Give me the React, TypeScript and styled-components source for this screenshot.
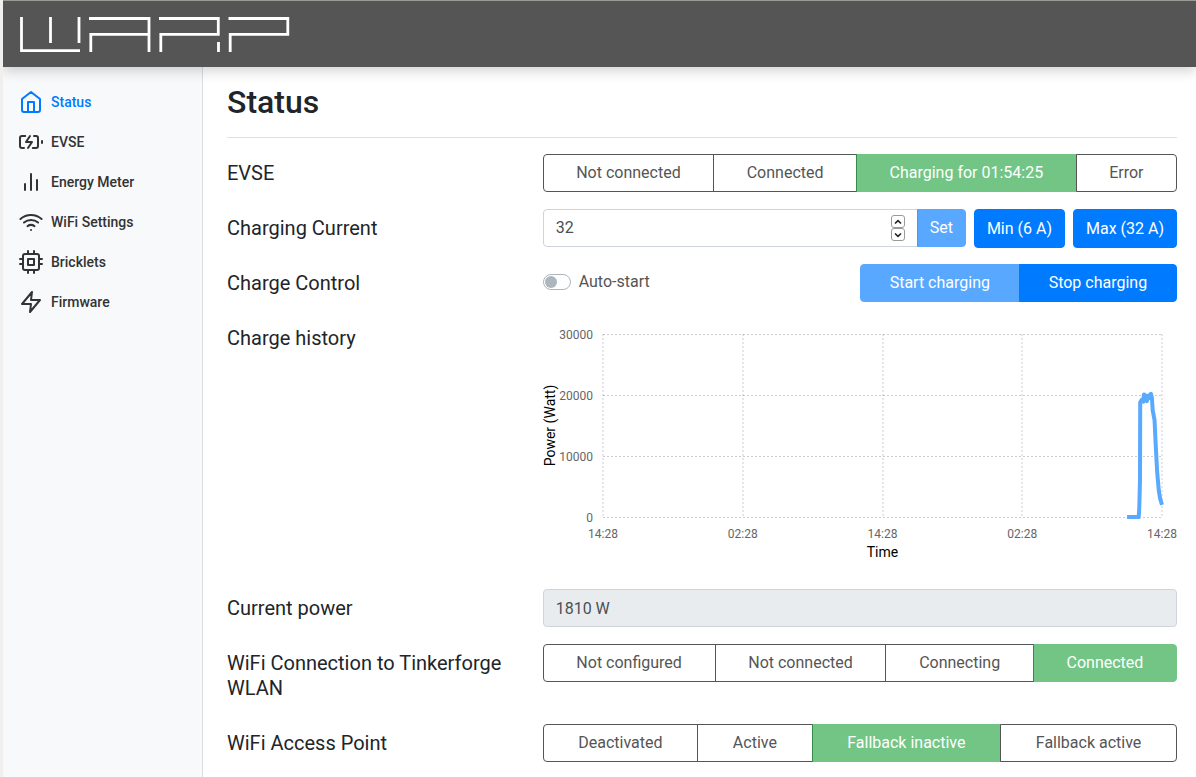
import React, { useLayoutEffect, useRef, useState } from "react";
import styled, { createGlobalStyle, css } from "styled-components";

const GlobalStyle = createGlobalStyle`
  *, *::before, *::after { box-sizing: border-box; }
  body {
    margin: 0;
    background: #fff;
    color: #212529;
    font-family: Roboto, "Liberation Sans", sans-serif;
    font-size: 16px;
    line-height: 24px;
  }
  button, input { font: inherit; margin: 0; }
`;

const Page = styled.div`
  display: flex;
  flex-direction: column;
  min-height: 100vh;
  border-left: 3px solid #f0efee;
  overflow: hidden;
`;

const Header = styled.header`
  display: flex;
  align-items: center;
  height: 67px;
  padding: 1px 17px 0;
  background: #555;
  border-top: 1px solid #9a9a94;
  box-shadow: 0 4px 12px rgba(0, 0, 0, 0.18);
  z-index: 1;
`;

const LogoLink = styled.a`
  display: flex;
`;

const Body = styled.div`
  display: flex;
  flex: 1;
`;

const Sidebar = styled.nav`
  flex: none;
  width: 200px;
  padding: 15px 0;
  background: #f8f9fa;
  border-right: 1px solid #dcdee0;
`;

const NavLink = styled.a<{ $active?: boolean }>`
  display: flex;
  align-items: center;
  gap: 8px;
  height: 40px;
  padding: 0 16px;
  font-size: 14px;
  font-weight: 500;
  text-decoration: none;
  color: ${(p) => (p.$active ? "#007bff" : "#333")};
`;

const Main = styled.main`
  flex: 1;
  min-width: 0;
  padding: 16px 19px 0 24px;
`;

const Title = styled.h1`
  margin: 0 0 16px;
  padding-bottom: 16px;
  border-bottom: 1px solid #dee2e6;
  font-size: 32px;
  line-height: 38px;
  font-weight: 500;
`;

const Row = styled.div`
  display: grid;
  grid-template-columns: calc(100% / 3 - 1px) 1fr;
  margin-bottom: 16px;
`;

const labelStyle = css`
  padding: 7px 15px 7px 0;
  font-size: 20px;
  line-height: 25px;
`;

const RowLabel = styled.div`
  ${labelStyle}
`;

const FieldLabel = styled.label`
  ${labelStyle}
`;

const Group = styled.div`
  display: flex;
  align-items: flex-start;
  min-width: 0;
`;

const joined = css`
  position: relative;
  &:not(:first-child) {
    margin-left: -1px;
    border-top-left-radius: 0;
    border-bottom-left-radius: 0;
  }
  &:not(:last-child) {
    border-top-right-radius: 0;
    border-bottom-right-radius: 0;
  }
`;

const StateButton = styled.button<{ $on?: boolean }>`
  flex: 1 1 auto;
  height: 38px;
  padding: 0 12px;
  border: 1px solid ${(p) => (p.$on ? "#28a745" : "#555")};
  border-radius: 4px;
  background: ${(p) => (p.$on ? "#28a745" : "transparent")};
  color: ${(p) => (p.$on ? "#fff" : "#555")};
  opacity: ${(p) => (p.$on ? 0.65 : 1)};
  ${joined}
`;

const PrimaryButton = styled.button<{ $grow?: boolean; $joined?: boolean }>`
  flex: ${(p) => (p.$grow ? "1 1 auto" : "none")};
  min-height: 38px;
  padding: 0 12px;
  border: 1px solid #007bff;
  border-radius: 4px;
  background: #007bff;
  color: #fff;
  &:disabled {
    opacity: 0.65;
  }
  ${(p) => p.$joined && joined}
`;

const CurrentControls = styled.div`
  display: flex;
  gap: 8px;
`;

const InputGroup = styled.div`
  display: flex;
  flex: 1;
  align-items: flex-start;
  min-width: 0;
`;

const NumberField = styled.div`
  display: flex;
  flex: 1;
  align-items: center;
  min-width: 0;
  height: 38px;
  padding: 0 12px;
  border: 1px solid #ced4da;
  border-radius: 4px 0 0 4px;
  background: #fff;
`;

const NumberInput = styled.input`
  flex: 1;
  min-width: 0;
  padding: 0;
  border: 0;
  outline: 0;
  color: #495057;
  appearance: textfield;
  &::-webkit-inner-spin-button {
    appearance: none;
  }
`;

const Spinner = styled.div`
  display: flex;
  flex-direction: column;
`;

const SpinButton = styled.button`
  display: flex;
  align-items: center;
  justify-content: center;
  width: 14px;
  height: 13px;
  padding: 0;
  border: 1px solid #999;
  border-radius: 3px;
  background: #fff;
  color: #222;
`;

const PowerInput = styled.input`
  width: 100%;
  height: 38px;
  padding: 0 12px;
  border: 1px solid #ced4da;
  border-radius: 4px;
  background: #e9ecef;
  color: #495057;
`;

const ControlGrid = styled.div`
  display: grid;
  grid-template-columns: 1fr 1fr;
`;

const SwitchLabel = styled.label`
  display: flex;
  align-items: center;
  align-self: start;
  gap: 8px;
  height: 36px;
  color: #555;
`;

const Switch = styled.input`
  appearance: none;
  display: flex;
  align-items: center;
  width: 28px;
  height: 16px;
  padding: 0 1px;
  border: 1px solid #adb5bd;
  border-radius: 8px;
  background: #fff;
  &::before {
    content: "";
    width: 12px;
    height: 12px;
    border-radius: 50%;
    background: #adb5bd;
  }
  &:checked {
    justify-content: flex-end;
    border-color: #007bff;
    background: #007bff;
  }
  &:checked::before {
    background: #fff;
  }
`;

const ChartBox = styled.div`
  height: 254px;
  min-width: 0;
`;

const ChartSvg = styled.svg`
  display: block;
  width: 100%;
  height: 100%;
  overflow: visible;
`;

const GridLine = styled.line`
  stroke: rgba(0, 0, 0, 0.2);
  stroke-width: 1;
  stroke-dasharray: 2 2;
`;

const Tick = styled.text`
  font-size: 12px;
  fill: #666;
`;

const AxisTitle = styled.text`
  font-size: 14px;
  fill: #000;
  text-anchor: middle;
`;

const PowerLine = styled.polyline`
  fill: none;
  stroke: #59a9ff;
  stroke-width: 4;
  stroke-linejoin: round;
`;

function Logo() {
  return (
    <svg width="270" height="36" viewBox="0 0 270 36" fill="none" stroke="#fff" strokeWidth="2.8" role="img" aria-label="WARP">
      <path d="M1.5 0V33.7H60M30.5 0V26M59 0V26" />
      <path d="M69 1.5H129V35M128 17.3H70.8V35" />
      <path d="M139 1.5H198.3V17.3H140.8V35M198.5 25V35" />
      <path d="M208.5 1.5H267.8V17.3H210.2V35" />
    </svg>
  );
}

// Samples of the last 48 hours: [hours since start, watts].
const samples: [number, number][] = [
  [45, 0], [46, 0], [46.05, 1500], [46.11, 6000], [46.13, 18800], [46.26, 19200], [46.4, 18900], [46.45, 20100],
  [46.6, 19900], [46.7, 19000], [46.85, 19900], [46.92, 19500], [47.05, 20200], [47.13, 19600],
  [47.2, 17500], [47.36, 15900], [47.46, 11800], [47.58, 7500], [47.72, 4400], [47.84, 3000], [48, 2000],
];
const timeTicks = ["14:28", "02:28", "14:28", "02:28", "14:28"];
const powerTicks = [30000, 20000, 10000, 0];

function HistoryChart() {
  const box = useRef<HTMLDivElement>(null);
  const [width, setWidth] = useState(634);
  useLayoutEffect(() => {
    const el = box.current!;
    const measure = () => setWidth(Math.round(el.clientWidth));
    measure();
    const observer = new ResizeObserver(measure);
    observer.observe(el);
    return () => observer.disconnect();
  }, []);

  const left = 60;
  const right = width - 15;
  const top = 15;
  const bottom = 198;
  const x = (hours: number) => left + ((right - left) * hours) / 48;
  const y = (watts: number) => bottom - ((bottom - top) * watts) / 30000;
  const middle = (top + bottom) / 2;

  return (
    <ChartBox ref={box}>
      <ChartSvg role="img" aria-label="Charge history">
        {powerTicks.map((w) => (
          <g key={w}>
            <GridLine x1={left} x2={right} y1={y(w) + 0.5} y2={y(w) + 0.5} />
            <Tick x={left - 10} y={y(w) + 5} textAnchor="end">{w}</Tick>
          </g>
        ))}
        {timeTicks.map((t, i) => (
          <g key={i}>
            <GridLine x1={Math.round(x(i * 12))} x2={Math.round(x(i * 12))} y1={top} y2={bottom} />
            <Tick x={x(i * 12)} y={bottom + 21} textAnchor="middle">{t}</Tick>
          </g>
        ))}
        <AxisTitle x={(left + right) / 2} y={bottom + 40}>Time</AxisTitle>
        <AxisTitle transform={`translate(12 ${middle}) rotate(-90)`}>Power (Watt)</AxisTitle>
        <PowerLine points={samples.map(([h, w]) => `${x(h)},${y(w)}`).join(" ")} />
      </ChartSvg>
    </ChartBox>
  );
}

function StateGroup({ label, states, active }: { label: string; states: string[]; active: number }) {
  return (
    <Row>
      <RowLabel>{label}</RowLabel>
      <Group role="group" aria-label={label}>
        {states.map((s, i) => (
          <StateButton key={s} type="button" $on={i === active}>{s}</StateButton>
        ))}
      </Group>
    </Row>
  );
}

const navItems = [
  { label: "Status", icon: <path d="M3 9l9-7 9 7v11a2 2 0 0 1-2 2H5a2 2 0 0 1-2-2zM9 22V12h6v10" /> },
  { label: "EVSE", icon: <path d="M5 18H3a2 2 0 0 1-2-2V8a2 2 0 0 1 2-2h3.19M15 6h2a2 2 0 0 1 2 2v8a2 2 0 0 1-2 2h-3.19M23 13v-2M11 6l-4 6h6l-4 6" /> },
  { label: "Energy Meter", icon: <path d="M18 20V10M12 20V4M6 20v-6" /> },
  { label: "WiFi Settings", icon: <path d="M5 12.55a11 11 0 0 1 14.08 0M1.42 9a16 16 0 0 1 21.16 0M8.53 16.11a6 6 0 0 1 6.95 0M12 20h.01" /> },
  { label: "Bricklets", icon: <path d="M6 4h12a2 2 0 0 1 2 2v12a2 2 0 0 1-2 2H6a2 2 0 0 1-2-2V6a2 2 0 0 1 2-2zM9 9h6v6H9zM9 1v3M15 1v3M9 20v3M15 20v3M20 9h3M20 14h3M1 9h3M1 14h3" /> },
  { label: "Firmware", icon: <path d="M13 2L3 14h9l-1 8 10-12h-9z" /> },
];

function Chevron({ up }: { up?: boolean }) {
  return (
    <svg width="8" height="6" viewBox="0 0 8 6" fill="none" stroke="currentColor" strokeWidth="1.6">
      <path d={up ? "M1 4.5L4 1.7L7 4.5" : "M1 1.5L4 4.3L7 1.5"} />
    </svg>
  );
}

export default function App() {
  const [current, setCurrent] = useState(32);
  const [autoStart, setAutoStart] = useState(false);
  return (
    <Page>
      <GlobalStyle />
      <Header>
        <LogoLink href="#status"><Logo /></LogoLink>
      </Header>
      <Body>
        <Sidebar>
          {navItems.map(({ label, icon }, i) => (
            <NavLink key={label} href={`#${label}`} $active={i === 0}>
              <svg width="24" height="24" viewBox="0 0 24 24" fill="none" stroke="currentColor" strokeWidth="2" strokeLinecap="round" strokeLinejoin="round">
                {icon}
              </svg>
              {label}
            </NavLink>
          ))}
        </Sidebar>
        <Main>
          <Title>Status</Title>
          <StateGroup label="EVSE" states={["Not connected", "Connected", "Charging for 01:54:25", "Error"]} active={2} />
          <Row>
            <FieldLabel htmlFor="current">Charging Current</FieldLabel>
            <CurrentControls>
              <InputGroup>
                <NumberField>
                  <NumberInput id="current" type="number" value={current} onChange={(e) => setCurrent(+e.target.value)} />
                  <Spinner>
                    <SpinButton type="button" aria-label="Increase" onClick={() => setCurrent(current + 1)}><Chevron up /></SpinButton>
                    <SpinButton type="button" aria-label="Decrease" onClick={() => setCurrent(current - 1)}><Chevron /></SpinButton>
                  </Spinner>
                </NumberField>
                <PrimaryButton type="button" disabled $joined>Set</PrimaryButton>
              </InputGroup>
              <PrimaryButton type="button" onClick={() => setCurrent(6)}>Min (6 A)</PrimaryButton>
              <PrimaryButton type="button" onClick={() => setCurrent(32)}>Max (32 A)</PrimaryButton>
            </CurrentControls>
          </Row>
          <Row>
            <RowLabel>Charge Control</RowLabel>
            <ControlGrid>
              <SwitchLabel>
                <Switch type="checkbox" checked={autoStart} onChange={(e) => setAutoStart(e.target.checked)} />
                Auto-start
              </SwitchLabel>
              <Group>
                <PrimaryButton type="button" disabled $grow $joined>Start charging</PrimaryButton>
                <PrimaryButton type="button" $grow $joined>Stop charging</PrimaryButton>
              </Group>
            </ControlGrid>
          </Row>
          <Row>
            <RowLabel>Charge history</RowLabel>
            <HistoryChart />
          </Row>
          <Row>
            <FieldLabel htmlFor="power">Current power</FieldLabel>
            <PowerInput id="power" type="text" readOnly value="1810 W" />
          </Row>
          <StateGroup label="WiFi Connection to Tinkerforge WLAN" states={["Not configured", "Not connected", "Connecting", "Connected"]} active={3} />
          <StateGroup label="WiFi Access Point" states={["Deactivated", "Active", "Fallback inactive", "Fallback active"]} active={2} />
        </Main>
      </Body>
    </Page>
  );
}
